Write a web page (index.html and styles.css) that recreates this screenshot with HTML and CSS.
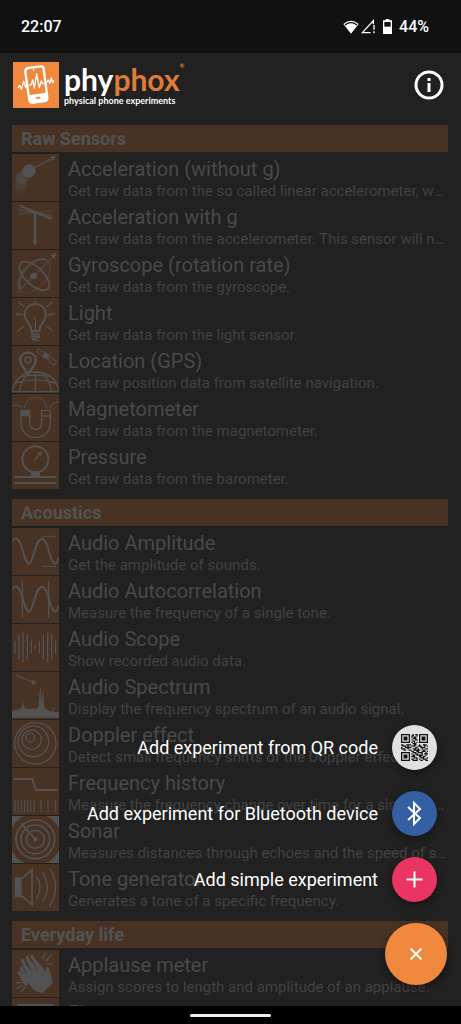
FILE: index.html
```
<!DOCTYPE html>
<html lang="en">
  <head>
    <meta charset="utf-8" />
    <meta name="viewport" content="width=device-width" />
    <title>phyphox</title>
    <link rel="stylesheet" href="styles.css">
  </head>

  <body>
    <div class="statusbar">
      <span class="clock">22:07</span>
      <div class="status">
        <svg class="wifi" viewBox="0 0 48 42"><path d="M24 41L1 12Q24-8 47 12Z" fill="#fff"/><path d="M6 15Q24 1 42 15" fill="none" stroke="#111" stroke-width="4"/></svg>
        <svg class="signal" viewBox="0 0 45 45"><path d="M37 16V5L4 41H29" fill="none" stroke="#fff" stroke-width="4"/><path d="M39 18V32M39 37V43" stroke="#fff" stroke-width="4"/></svg>
        <svg class="battery" viewBox="0 0 27 45"><path d="M8 0h11v4h8v41H0V4h8z" fill="#fff"/><path d="M4 9h19v14H4z" fill="#111"/></svg>
        <span>44%</span>
      </div>
    </div>

    <header class="appbar">
      <svg class="logo" viewBox="0 0 138 138">
        <rect width="138" height="138" fill="#f0883e"/>
        <g fill="none" stroke="#fff" stroke-width="4" stroke-linejoin="round">
          <path d="M15 78l5-8 5 12 7-24 6 18 5-6M49 72l6-5 4-14 5 25 7-42 8 41 6-20 6 10M100 62l6-8 4 10 5-16 4 14 4-7"/>
          <path d="M45 18L83 13q8-1 9 8l11 85q1 9-8 11l-34 5q-10 1-12-8L37 30q-1-10 8-12z" stroke-width="7"/>
          <path d="M62 27V12M61 21l2-6" stroke-width="3"/>
        </g>
        <path d="M45 100l56-8 3 20q1 6-6 7l-40 5q-8 1-10-7z" fill="#fff"/>
        <rect x="69" y="104" width="13" height="6" rx="2" fill="#f0883e"/>
      </svg>
      <div class="brand">
        <h1>phy<span>phox</span><sup>®</sup></h1>
        <p>physical phone experiments</p>
      </div>
      <button class="info" aria-label="Info">
        <svg viewBox="0 0 30 30"><circle cx="15" cy="15" r="13" fill="none" stroke="#fff" stroke-width="3"/><path d="M15 13v9M15 8v3" stroke="#fff" stroke-width="3"/></svg>
      </button>
    </header>

    <main class="list">
      <section>
        <h2>Raw Sensors</h2>
        <a class="row" href="#">
          <svg class="icon" viewBox="0 0 141 141">
            <circle class="solid" cx="28" cy="108" r="16" opacity=".15"/>
            <circle class="solid" cx="26" cy="92" r="19" opacity=".3"/>
            <circle class="solid" cx="30" cy="71" r="19" opacity=".6"/>
            <circle class="solid" cx="51" cy="51" r="20"/>
            <path d="M66 42L119 14" stroke-width="4"/><path class="solid" d="M131 7l-16 1 7 13z"/>
          </svg>
          <span class="text"><b>Acceleration (without g)</b><small>Get raw data from the so called linear accelerometer, which is the acceleration without g.</small></span>
        </a>
        <a class="row" href="#">
          <svg class="icon" viewBox="0 0 141 141">
            <path d="M18 22L122 42" stroke-width="6" opacity=".6"/><path d="M19 36L122 26" stroke-width="6" opacity=".4"/>
            <path d="M23 11L119 51" stroke-width="6"/><path d="M69 30V120" stroke-width="8"/><path class="solid" d="M69 132l-9-16h18z"/>
          </svg>
          <span class="text"><b>Acceleration with g</b><small>Get raw data from the accelerometer. This sensor will not show zero at rest.</small></span>
        </a>
        <a class="row" href="#">
          <svg class="icon" viewBox="0 0 141 141">
            <ellipse cx="66" cy="78" rx="60" ry="36" transform="rotate(-48 66 78)" opacity=".35"/>
            <path d="M27 119A60 36-48 0 1 103 29" />
            <ellipse cx="67" cy="78" rx="56" ry="27" transform="rotate(43 67 78)"/>
            <path d="M13 130L124 18" stroke-width="3"/><circle class="solid" cx="65" cy="78" r="10"/><path class="solid" d="M133 9l-18 6 12 12z"/>
          </svg>
          <span class="text"><b>Gyroscope (rotation rate)</b><small>Get raw data from the gyroscope.</small></span>
        </a>
        <a class="row" href="#">
          <svg class="icon" viewBox="0 0 141 141">
            <path d="M58 99C58 75 38 73 38 50a32 32 0 0 1 64 0C102 73 82 75 82 99z" stroke-width="6"/>
            <path d="M65 59h6V99" stroke-width="3"/>
            <path d="M57 106l27 4M57 114l27 4M60 123l20 4" stroke-width="6"/>
            <path d="M18 11l20 17M11 48l22 2M15 100l22-16M70 7v7M102 28l21-17M107 50l22-2M103 84l20 16" stroke-width="4"/>
          </svg>
          <span class="text"><b>Light</b><small>Get raw data from the light sensor.</small></span>
        </a>
        <a class="row" href="#">
          <svg class="icon" viewBox="0 0 141 141">
            <path d="M0 137Q12 79 70 78Q130 79 141 137M0 137H141M9 111Q70 92 132 111M30 92Q70 82 111 92M70 78V137M48 83Q27 105 22 137M92 83Q115 105 119 137" stroke-width="4"/>
            <path d="M48 84Q24 53 24 43a24 24 0 0 1 48 0Q72 53 48 84z" stroke-width="7" fill="#483224"/>
            <circle cx="48" cy="42" r="9" stroke-width="5"/>
            <path d="M79 8l20 12-7 11-18-13zM115 33l19 13-8 12-19-14z" stroke-width="3"/>
            <path class="solid" d="M100 18l14 9-9 15-14-9z"/>
          </svg>
          <span class="text"><b>Location (GPS)</b><small>Get raw position data from satellite navigation.</small></span>
        </a>
        <a class="row" href="#">
          <svg class="icon" viewBox="0 0 141 141">
            <path d="M27 49V88a44 43 0 0 0 88 0V49H89V88a18 19 0 0 1-36 0V49zM89 66h26" stroke-width="4"/>
            <path class="solid" d="M27 48h26v19H27z"/>
            <path d="M38 42C43-1 99-1 104 42M0 35q21-6 30 8M141 24q-22 0-28 19" stroke-width="3"/>
          </svg>
          <span class="text"><b>Magnetometer</b><small>Get raw data from the magnetometer.</small></span>
        </a>
        <a class="row" href="#">
          <svg class="icon" viewBox="0 0 141 141">
            <circle cx="70" cy="52" r="39" stroke-width="6"/><path class="solid" d="M56 90h28v14H56z"/>
            <path d="M8 105H134M8 123H134" stroke-width="6"/><path d="M68 54L83 35" stroke-width="4"/><path class="solid" d="M90 26L75 34l12 9z"/>
          </svg>
          <span class="text"><b>Pressure</b><small>Get raw data from the barometer.</small></span>
        </a>
      </section>

      <section>
        <h2>Acoustics</h2>
        <a class="row" href="#">
          <svg class="icon" viewBox="0 0 141 141">
            <path d="M0 41Q12 23 23 43C33 61 39 107 51 107S70 32 90 32S112 107 130 107Q136 106 141 87" stroke-width="6"/>
            <path d="M89 25h43M89 115h43" stroke-width="3"/>
          </svg>
          <span class="text"><b>Audio Amplitude</b><small>Get the amplitude of sounds.</small></span>
        </a>
        <a class="row" href="#">
          <svg class="icon" viewBox="0 0 141 141">
            <path d="M0 41Q12 23 23 43C33 61 39 107 51 107S70 32 90 32S112 107 130 107Q136 106 141 87" stroke-width="6"/>
            <path d="M31 14V125M110 14V125" stroke-width="4"/>
          </svg>
          <span class="text"><b>Audio Autocorrelation</b><small>Measure the frequency of a single tone.</small></span>
        </a>
        <a class="row" href="#">
          <svg class="icon" viewBox="0 0 141 141">
            <path d="M9 50v38M21 31v76M33 22v94M46 31v76M58 50v38M70 64v10M82 50v38M94 31v76M107 22v94M119 31v76M131 50v38" stroke-width="4"/>
          </svg>
          <span class="text"><b>Audio Scope</b><small>Show recorded audio data.</small></span>
        </a>
        <a class="row" href="#">
          <svg class="icon" viewBox="0 0 141 141">
            <path class="solid" d="M0 137V117L22 112 29 106 32 82 36 106 44 112 58 110 64 107 70 112 79 105 85 38 88 92 93 52 97 108 112 118 121 119 123 101 126 120 141 121V137z"/>
            <path d="M13 11L63 30" stroke-width="4"/><path class="solid" d="M75 34l-16-13v17z"/>
          </svg>
          <span class="text"><b>Audio Spectrum</b><small>Display the frequency spectrum of an audio signal.</small></span>
        </a>
        <a class="row" href="#">
          <svg class="icon" viewBox="0 0 141 141">
            <g stroke-width="4"><circle cx="70" cy="70" r="62"/><circle cx="64" cy="64" r="46"/><circle cx="59" cy="59" r="29"/><circle cx="55" cy="53" r="13"/></g>
          </svg>
          <span class="text"><b>Doppler effect</b><small>Detect small frequency shifts of the Doppler effect.</small></span>
        </a>
        <a class="row" href="#">
          <svg class="icon" viewBox="0 0 141 141">
            <path d="M5 33H60L72 66H136" stroke-width="6"/>
            <path d="M9 96v38M18 96v38M28 96v38M38 96v38M47 96v38M56 96v38M66 96v38M87 96v38M108 96v38M131 96v38" stroke-width="3"/>
          </svg>
          <span class="text"><b>Frequency history</b><small>Measure the frequency change over time for a single tone.</small></span>
        </a>
        <a class="row" href="#">
          <svg class="icon sonar" viewBox="0 0 141 141">
            <circle cx="70" cy="70" r="78" fill="#483224" stroke="none"/>
            <g stroke-width="5"><circle cx="70" cy="70" r="58"/><circle cx="70" cy="70" r="43"/><circle cx="70" cy="70" r="27"/><path d="M70 70L27 22"/></g>
            <circle class="solid" cx="70" cy="70" r="7"/>
          </svg>
          <span class="text"><b>Sonar</b><small>Measures distances through echoes and the speed of sound.</small></span>
        </a>
        <a class="row" href="#">
          <svg class="icon" viewBox="0 0 141 141">
            <path class="solid" d="M9 41h20v58H9z"/>
            <path d="M11 43H31L60 17V123L31 97H11z" stroke-width="5"/>
            <path d="M73 37q22 33 0 66M91 25q30 45 0 90M112 12q38 58 0 116" stroke-width="4"/>
          </svg>
          <span class="text"><b>Tone generator</b><small>Generates a tone of a specific frequency.</small></span>
        </a>
      </section>

      <section>
        <h2>Everyday life</h2>
        <a class="row" href="#">
          <svg class="icon" viewBox="0 0 141 141">
            <path d="M28 53L45 92M31 31L55 82M45 22L68 72M60 19L79 55M22 67L42 103" stroke-width="10" stroke-linecap="round"/>
            <path class="solid" d="M42 68L54 87 39 49Q43 43 48 49L66 76 53 38Q58 33 63 40L80 70 68 32Q74 27 79 37L103 67 101 53Q107 47 111 57L123 98 91 129Q77 129 65 119L37 86z" stroke="#483224" stroke-width="2"/>
            <path d="M91 28l8-17M101 34l19-21M106 43l17-3M10 98h20M12 116l20-10M27 127l12-17" stroke-width="4"/>
          </svg>
          <span class="text"><b>Applause meter</b><small>Assign scores to length and amplitude of an applause.</small></span>
        </a>
        <a class="row" href="#">
          <svg class="icon" viewBox="0 0 141 141"><path class="solid" d="M15 18h110v105H15z"/></svg>
          <span class="text"><b>Elevator</b><small>Measure the vertical velocity of an elevator.</small></span>
        </a>
      </section>
    </main>

    <div class="navbar"><span></span></div>

    <div class="fab-menu">
      <button class="action">Add experiment from QR code
        <span class="mini qr">
          <svg viewBox="0 0 21 21">
            <path d="M0 .5h7M14 .5h7M0 6.5h7M14 6.5h7M.5 0v7M6.5 0v7M14.5 0v7M20.5 0v7M0 14.5h7M0 20.5h7M.5 14v7M6.5 14v7" stroke="#111"/>
            <path d="M2 2h3v3H2zM16 2h3v3h-3zM2 16h3v3H2z" fill="#111"/>
            <path d="M9 .5h1M11 .5h2M8 1.5h2M12 1.5h1M8 2.5h1M10 2.5h2M9 3.5h3M8 4.5h1M11 4.5h2M9 5.5h2M8 6.5h1M10 6.5h1M12 6.5h1M9 7.5h3M0 8.5h2M4 8.5h4M10 8.5h2M14 8.5h1M17 8.5h3M1 9.5h3M5 9.5h1M8 9.5h3M13 9.5h3M18 9.5h1M20 9.5h1M0 10.5h1M3 10.5h5M11 10.5h2M15 10.5h4M0 11.5h3M5 11.5h1M9 11.5h3M13 11.5h1M16 11.5h1M19 11.5h2M2 12.5h2M6 12.5h2M10 12.5h5M17 12.5h2M8 13.5h2M12 13.5h2M16 13.5h3M20 13.5h1M9 14.5h3M13 14.5h4M19 14.5h1M8 15.5h1M11 15.5h2M16 15.5h1M18 15.5h3M9 16.5h2M12 16.5h5M19 16.5h1M8 17.5h3M14 17.5h2M17 17.5h2M10 18.5h3M15 18.5h3M20 18.5h1M8 19.5h2M12 19.5h1M14 19.5h1M17 19.5h3M9 20.5h4M15 20.5h2M19 20.5h2" stroke="#111"/>
          </svg>
        </span>
      </button>
      <button class="action">Add experiment for Bluetooth device
        <span class="mini bluetooth">
          <svg viewBox="0 0 27 27"><path d="M7 7L19 18 13 24V3L19 9 7 20" fill="none" stroke="#fff" stroke-width="2"/></svg>
        </span>
      </button>
      <button class="action">Add simple experiment
        <span class="mini simple">
          <svg viewBox="0 0 27 27"><path d="M13.500 5.500V21.500M5.500 13.500H21.500" stroke="#fff" stroke-width="2"/></svg>
        </span>
      </button>
      <button class="close" aria-label="Close menu">
        <svg viewBox="0 0 14 14"><path d="M1.500 1.500l11 11M12.500 1.500l-11 11" stroke="#fff" stroke-width="2"/></svg>
      </button>
    </div>
  </body>
</html>
```
FILE: styles.css
```
* {
  box-sizing: border-box;
}

body {
  display: flex;
  flex-direction: column;
  height: 100vh;
  margin: 0;
  overflow: hidden;
  background: #212121;
  color: #fff;
  font-family: Roboto, sans-serif;
}

button {
  padding: 0;
  border: 0;
  background: none;
  color: #fff;
  font-family: inherit;
  cursor: pointer;
}

svg {
  display: block;
}

.statusbar {
  display: flex;
  flex: none;
  justify-content: space-between;
  align-items: center;
  height: 53px;
  padding: 0 32px 0 21px;
  background: #111;
  font-size: 16px;
  font-weight: 500;
}

.status {
  display: flex;
  align-items: center;
}

.wifi {
  width: 16px;
  height: 14px;
}

.signal {
  width: 15px;
  height: 15px;
  margin: 0 7px 0 2px;
}

.battery {
  width: 9px;
  height: 15px;
  margin-right: 7px;
}

.appbar {
  display: flex;
  flex: none;
  align-items: center;
  height: 63px;
  padding: 0 17px 0 13px;
}

.logo {
  width: 46px;
  height: 46px;
}

.brand {
  flex: 1;
  margin-left: 5px;
  font-family: Lato, sans-serif;
}

.brand h1 {
  margin: 0;
  font-size: 30px;
  line-height: 32px;
  font-weight: 700;
}

.brand h1 span,
.brand sup {
  color: #e07b35;
}

.brand sup {
  font-size: 6px;
  line-height: 6px;
  vertical-align: top;
}

.brand p {
  margin: 0;
  font-size: 9px;
  line-height: 12px;
  font-weight: 700;
}

.info svg {
  width: 30px;
  height: 30px;
}

.list {
  flex: 1;
  min-height: 0;
  overflow: hidden;
  padding: 9px 13px 0 12px;
}

section {
  margin-bottom: 9px;
}

h2 {
  margin: 0 0 2px;
  padding-left: 9px;
  background: #483224;
  color: #525252;
  font-size: 18px;
  line-height: 27px;
  font-weight: 700;
}

.row {
  display: flex;
  height: 48px;
  color: #494949;
  text-decoration: none;
}

.icon {
  flex: none;
  width: 47px;
  height: 47px;
  background: #483224;
  fill: none;
  stroke: #525252;
  stroke-width: 5;
}

.icon .solid {
  fill: #525252;
  stroke: none;
}

.sonar {
  background: #525252;
}

.text {
  flex: 1;
  min-width: 0;
  padding: 2px 1px 0 9px;
}

.text b,
.text small {
  display: block;
  overflow: hidden;
  white-space: nowrap;
  text-overflow: ellipsis;
}

.text b {
  font-size: 20px;
  line-height: 26px;
  font-weight: 400;
}

.text small {
  color: #424242;
  font-size: 15px;
  line-height: 19px;
}

.navbar {
  display: flex;
  flex: none;
  justify-content: center;
  height: 18px;
  padding-top: 8px;
  background: #000;
}

.navbar span {
  width: 81px;
  height: 3px;
  border-radius: 2px;
  background: #eee;
}

/* floating menu, drawn over the list */
.fab-menu {
  position: absolute;
  right: 14px;
  bottom: 39px;
  display: flex;
  flex-direction: column;
  align-items: flex-end;
  gap: 21px;
}

.action {
  display: flex;
  align-items: center;
  gap: 14px;
  margin-right: 10px;
  font-size: 18px;
}

.mini,
.close {
  display: flex;
  justify-content: center;
  align-items: center;
  border-radius: 50%;
  box-shadow: 0 3px 8px rgba(0, 0, 0, 0.4);
}

.mini {
  width: 45px;
  height: 45px;
}

.mini svg {
  width: 27px;
  height: 27px;
}

.qr {
  background: #e0e0e0;
}

.bluetooth {
  background: #345fa3;
}

.simple {
  background: #ea3462;
}

.close {
  width: 62px;
  height: 62px;
  background: #f0883e;
}

.close svg {
  width: 14px;
  height: 14px;
}
```
